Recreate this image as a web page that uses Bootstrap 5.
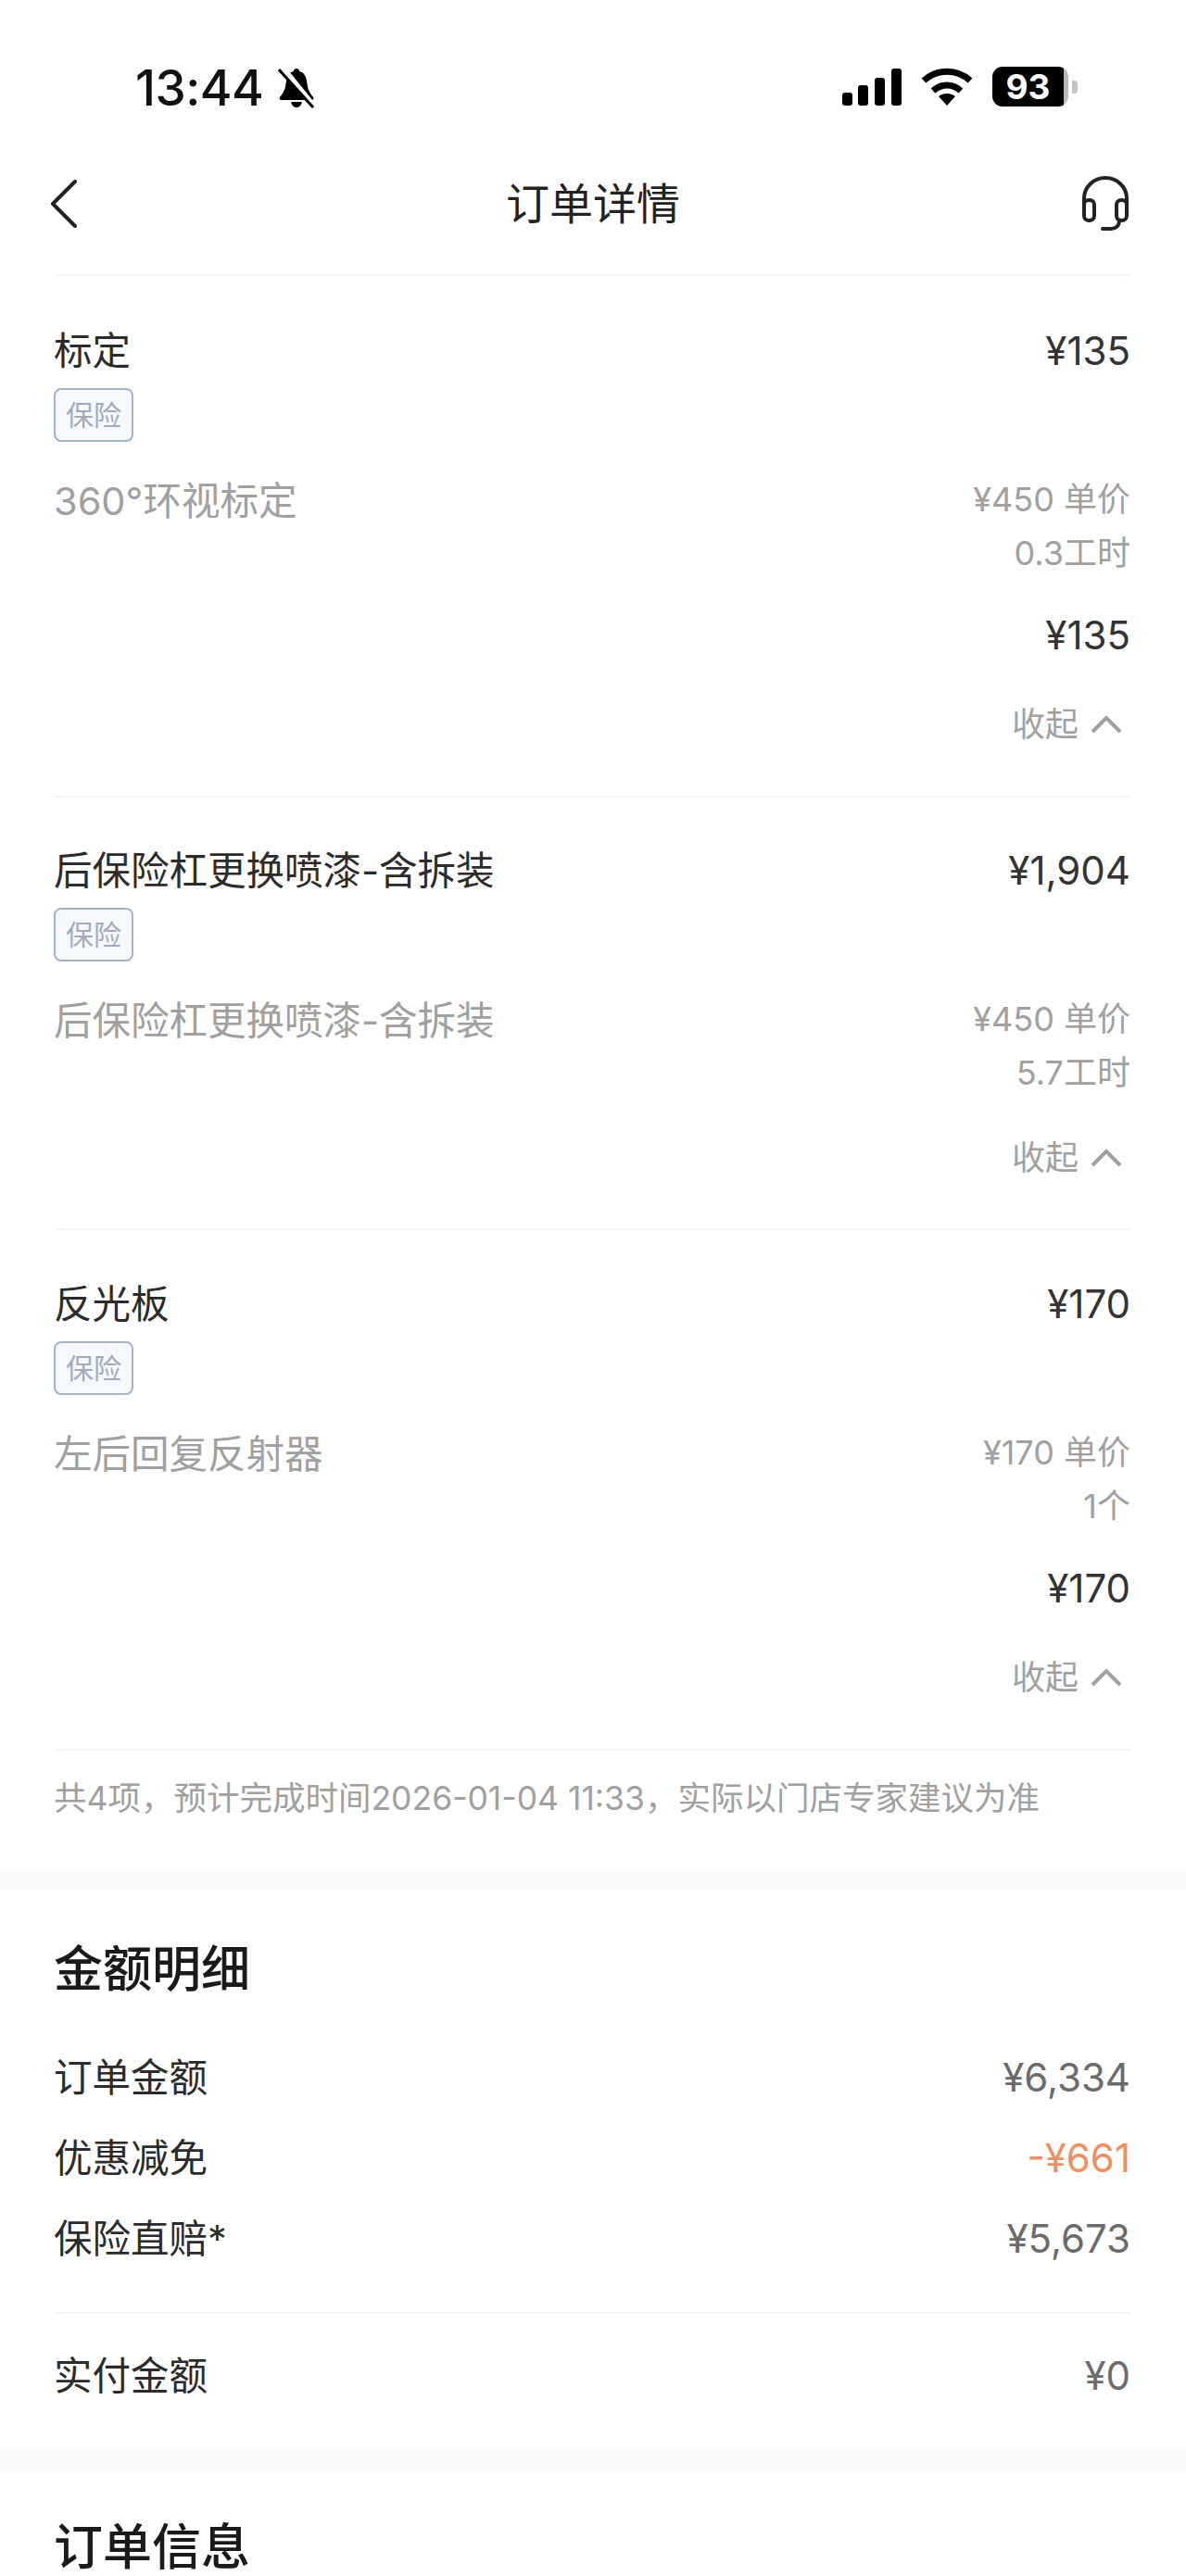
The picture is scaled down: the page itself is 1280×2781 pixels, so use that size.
<!DOCTYPE html>
<html lang="zh-CN">
<head>
    <meta charset="UTF-8">
    <title>订单详情</title>
    <link href="https://cdn.jsdelivr.net/npm/bootstrap@5.3.0/dist/css/bootstrap.min.css" rel="stylesheet">
    <style>
        html, body { height: 2781px; overflow: hidden; }
        body {
            font-family: Inter, "Noto Sans CJK SC", sans-serif;
            color: #2b2b2b;
            background: #fff;
        }
        /* status bar */
        .status-row { height: 170px; padding: 72px 117px 0 146px; }
        .status-time { font-size: 53px; line-height: 46px; font-weight: 500; color: #111; letter-spacing: -.5px; }
        .tray-gap { margin-right: 21px; }
        .battery-box {
            width: 82px; height: 43px; border-radius: 11px; color: #fff;
            background: linear-gradient(90deg, #000 94%, #b9b9b9 94%);
            font-size: 37px; font-weight: 700; line-height: 43px; text-align: center; padding-right: 5px;
        }
        .battery-nub { width: 6px; height: 14px; margin-left: 4px; border-radius: 0 4px 4px 0; background: #c4c4c4; }
        /* title bar */
        .title-row { height: 126px; padding: 0 60px 26px 54px; }
        .title-side-l { width: 66px; }
        .title-side-r { width: 60px; }
        .title-text { font-size: 47px; line-height: 100px; flex: 1; text-align: center; color: #222; }
        .sep-line { height: 2px; background: #f5f5f5; margin: 0 60px 0 58px; }
        .band-a { height: 20px; background: #fafafa; }
        .band-b { height: 25px; background: #fafafa; }
        /* order items */
        .order-item { padding: 53px 60px 52px 58px; }
        .order-item-mid { padding-top: 51px; padding-bottom: 51px; }
        .order-item-last { padding-top: 52px; }
        .item-line { font-size: 41.5px; line-height: 56px; }
        .money { font-size: 42px; color: #333; }
        .ins-tag {
            display: inline-block; width: 86px; height: 58px; margin-top: 12px;
            border: 2px solid #a3b2c5; border-radius: 8px; background: #f6f9fc;
            color: #a0abc0; font-size: 30px; line-height: 54px; text-align: center;
        }
        .item-detail { margin-top: 33px; }
        .item-name { font-size: 41.5px; line-height: 62px; color: #a0a0a0; }
        .item-sub { font-size: 36px; line-height: 58px; color: #a0a0a0; }
        .item-price { margin-top: 32px; }
        .fold-row { font-size: 36px; line-height: 50px; color: #a0a0a0; margin-top: 43px; }
        .fold-row-near { margin-top: 38px; }
        .fold-row svg { margin: 0 8px 0 4px; }
        .note-line { font-size: 35.5px; line-height: 50px; color: #a0a0a0; padding: 27px 0 53px 58px; }
        /* amount block */
        .block-head { font-size: 53px; line-height: 70px; font-weight: 500; color: #1a1a1a; margin: 0; padding-left: 58px; }
        .head-amount { padding-top: 51px; margin-bottom: 54px; }
        .head-info { padding-top: 52px; line-height: 60px; }
        .amount-row { font-size: 41.5px; line-height: 56px; padding: 0 60px 0 58px; margin-bottom: 31px; }
        .amount-row-end { margin-bottom: 51px; }
        .amount-row-paid { margin: 39px 0 50px; }
        .amount-val { font-size: 42px; color: #6b6b6b; }
        .amount-off { font-size: 42px; color: #ee8f63; }
    </style>
</head>
<body>
    <!-- status bar -->
    <div class="status-row d-flex justify-content-between align-items-start">
        <div class="d-flex align-items-center gap-3">
            <span class="status-time">13:44</span>
            <svg width="40" height="44" viewBox="0 0 40 44">
                <path d="M20 1c2 0 3 1 3 3 5 1 7 5 8 10l1 7c1 4 3 7 6 11 1 2 0 3-2 3H4c-2 0-3-1-2-3 3-4 5-7 6-11l1-7c1-5 3-9 8-10 0-2 1-3 3-3z" fill="#000"/>
                <path d="M14 37h12c-1 4-3 6-6 6s-5-2-6-6z" fill="#000"/>
                <path d="M5 0l34 42" stroke="#fff" stroke-width="6"/>
                <path d="M1 2l37 41" stroke="#000" stroke-width="3"/>
            </svg>
        </div>
        <div class="d-flex align-items-center">
            <svg width="64" height="40" viewBox="0 0 64 40" class="tray-gap">
                <rect x="0" y="26" width="11" height="14" rx="3" fill="#000"/>
                <rect x="17" y="18" width="11" height="22" rx="3" fill="#000"/>
                <rect x="35" y="10" width="11" height="30" rx="3" fill="#000"/>
                <rect x="53" y="0" width="11" height="40" rx="3" fill="#000"/>
            </svg>
            <svg width="56" height="41" viewBox="0 0 56 41" class="tray-gap">
                <path d="M28 41l-9-10c5-4 13-4 18 0z" fill="#000"/>
                <path d="M13 25c9-8 21-8 30 0" fill="none" stroke="#000" stroke-width="7"/>
                <path d="M3 14c14-13 36-13 50 0" fill="none" stroke="#000" stroke-width="7"/>
            </svg>
            <div class="battery-box">93</div>
            <div class="battery-nub"></div>
        </div>
    </div>

    <!-- title bar -->
    <div class="title-row d-flex align-items-center">
        <div class="title-side-l">
            <svg width="30" height="52" viewBox="0 0 30 52" class="d-block">
                <path d="M27 2L3 26l24 24" fill="none" stroke="#222" stroke-width="4" stroke-linecap="round" stroke-linejoin="round"/>
            </svg>
        </div>
        <div class="title-text">订单详情</div>
        <div class="title-side-r d-flex justify-content-end">
            <svg width="54" height="60" viewBox="0 0 54 60" class="d-block">
                <path d="M4 38V24a23 22 0 0 1 46 0v14" fill="none" stroke="#222" stroke-width="4"/>
                <rect x="4" y="26" width="11" height="22" rx="5" fill="none" stroke="#222" stroke-width="4"/>
                <rect x="39" y="26" width="11" height="22" rx="5" fill="none" stroke="#222" stroke-width="4"/>
                <path d="M42 48c0 6-4 9-9 9h-9" fill="none" stroke="#222" stroke-width="4" stroke-linecap="round"/>
            </svg>
        </div>
    </div>
    <div class="sep-line"></div>

    <!-- items -->
    <div class="order-item">
        <div class="item-line d-flex justify-content-between"><span>标定</span><span class="money">¥135</span></div>
        <span class="ins-tag">保险</span>
        <div class="item-detail d-flex justify-content-between align-items-start">
            <div class="item-name">360°环视标定</div>
            <div class="text-end"><div class="item-sub">¥450 单价</div><div class="item-sub">0.3工时</div></div>
        </div>
        <div class="item-line item-price text-end"><span class="money">¥135</span></div>
        <div class="fold-row d-flex justify-content-end align-items-center gap-2">收起
            <svg width="36" height="22" viewBox="0 0 36 22"><path d="M3 19L18 4l15 15" fill="none" stroke="#a0a0a0" stroke-width="4"/></svg>
        </div>
    </div>
    <div class="sep-line"></div>

    <div class="order-item order-item-mid">
        <div class="item-line d-flex justify-content-between"><span>后保险杠更换喷漆-含拆装</span><span class="money">¥1,904</span></div>
        <span class="ins-tag">保险</span>
        <div class="item-detail d-flex justify-content-between align-items-start">
            <div class="item-name">后保险杠更换喷漆-含拆装</div>
            <div class="text-end"><div class="item-sub">¥450 单价</div><div class="item-sub">5.7工时</div></div>
        </div>
        <div class="fold-row fold-row-near d-flex justify-content-end align-items-center gap-2">收起
            <svg width="36" height="22" viewBox="0 0 36 22"><path d="M3 19L18 4l15 15" fill="none" stroke="#a0a0a0" stroke-width="4"/></svg>
        </div>
    </div>
    <div class="sep-line"></div>

    <div class="order-item order-item-last">
        <div class="item-line d-flex justify-content-between"><span>反光板</span><span class="money">¥170</span></div>
        <span class="ins-tag">保险</span>
        <div class="item-detail d-flex justify-content-between align-items-start">
            <div class="item-name">左后回复反射器</div>
            <div class="text-end"><div class="item-sub">¥170 单价</div><div class="item-sub">1个</div></div>
        </div>
        <div class="item-line item-price text-end"><span class="money">¥170</span></div>
        <div class="fold-row d-flex justify-content-end align-items-center gap-2">收起
            <svg width="36" height="22" viewBox="0 0 36 22"><path d="M3 19L18 4l15 15" fill="none" stroke="#a0a0a0" stroke-width="4"/></svg>
        </div>
    </div>
    <div class="sep-line"></div>
    <div class="note-line">共4项，预计完成时间2026-01-04 11:33，实际以门店专家建议为准</div>
    <div class="band-a"></div>

    <!-- amounts -->
    <h2 class="block-head head-amount">金额明细</h2>
    <div class="amount-row d-flex justify-content-between"><span>订单金额</span><span class="amount-val">¥6,334</span></div>
    <div class="amount-row d-flex justify-content-between"><span>优惠减免</span><span class="amount-off">-¥661</span></div>
    <div class="amount-row amount-row-end d-flex justify-content-between"><span>保险直赔*</span><span class="amount-val">¥5,673</span></div>
    <div class="sep-line"></div>
    <div class="amount-row amount-row-paid d-flex justify-content-between"><span>实付金额</span><span class="amount-val">¥0</span></div>
    <div class="band-b"></div>

    <h2 class="block-head head-info">订单信息</h2>

    <script src="https://cdn.jsdelivr.net/npm/bootstrap@5.3.0/dist/js/bootstrap.bundle.min.js"></script>
</body>
</html>
